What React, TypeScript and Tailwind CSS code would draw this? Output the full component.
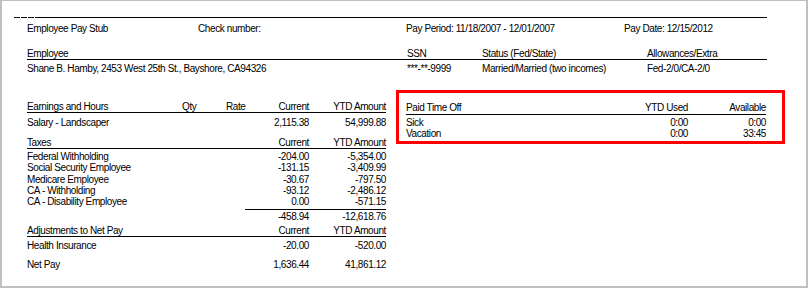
import React from "react";

const FONT = { fontFamily: '"Liberation Sans", Arial, sans-serif' };

type Row = {
  label: string;
  qty?: string;
  rate?: string;
  current?: string;
  ytd?: string;
};

const TAXES: Row[] = [
  { label: "Federal Withholding", current: "-204.00", ytd: "-5,354.00" },
  { label: "Social Security Employee", current: "-131.15", ytd: "-3,409.99" },
  { label: "Medicare Employee", current: "-30.67", ytd: "-797.50" },
  { label: "CA - Withholding", current: "-93.12", ytd: "-2,486.12" },
  { label: "CA - Disability Employee", current: "0.00", ytd: "-571.15" },
];

function LineRow({ row, className = "" }: { row: Row; className?: string }) {
  return (
    <div className={`grid grid-cols-[155px_44px_6px_77px_77px] items-center whitespace-nowrap ${className}`}>
      <span>{row.label}</span>
      <span>{row.qty}</span>
      <span>{row.rate}</span>
      <span className="text-right">{row.current}</span>
      <span className="text-right">{row.ytd}</span>
    </div>
  );
}

export default function App() {
  return (
    <div
      className="w-[808px] h-[288px] bg-white text-black text-[10px] leading-[11px] tracking-[-0.4px] border-[#c0c0c0] border-t border-l-2 border-r-2 border-b-2 overflow-hidden"
      style={FONT}
    >
      {/* top rule */}
      <div className="mt-[16px] ml-[12px] flex w-[753px] gap-[1px]">
        <div className="h-px w-[6px] bg-black" />
        <div className="h-px w-[6px] bg-black" />
        <div className="h-px w-[6px] bg-black" />
        <div className="h-px flex-1 bg-black" />
      </div>

      <div className="pl-[25px] w-[765px]">
        {/* title row */}
        <div className="mt-[5px] grid grid-cols-[171px_208px_218px_1fr] h-[11px] items-center whitespace-nowrap">
          <span>Employee Pay Stub</span>
          <span>Check number:</span>
          <span>Pay Period: 11/18/2007 - 12/01/2007</span>
          <span>Pay Date: 12/15/2012</span>
        </div>

        {/* employee block */}
        <div className="mt-[13px] grid grid-cols-[380px_75px_165px_1fr] h-[13px] items-center whitespace-nowrap border-b border-black">
          <span>Employee</span>
          <span>SSN</span>
          <span>Status (Fed/State)</span>
          <span>Allowances/Extra</span>
        </div>
        <div className="mt-[3px] grid grid-cols-[380px_75px_165px_1fr] h-[11px] items-center whitespace-nowrap">
          <span>Shane B. Hamby, 2453 West 25th St., Bayshore, CA94326</span>
          <span>***-**-9999</span>
          <span>Married/Married (two incomes)</span>
          <span>Fed-2/0/CA-2/0</span>
        </div>
      </div>

      <div className="mt-[16px] ml-[25px] flex items-start">
        {/* earnings / taxes */}
        <div className="mt-[10px] w-[359px]">
          <LineRow
            className="h-[13px] border-b border-black"
            row={{ label: "Earnings and Hours", qty: "Qty", rate: "Rate", current: "Current", ytd: "YTD Amount" }}
          />
          <LineRow className="mt-[4px] h-[11px]" row={{ label: "Salary - Landscaper", current: "2,115.38", ytd: "54,999.88" }} />

          <LineRow className="mt-[9px] h-[12px] border-b border-black" row={{ label: "Taxes", current: "Current", ytd: "YTD Amount" }} />
          <div className="mt-[2px]">
            {TAXES.map((r) => (
              <LineRow key={r.label} className="h-[11.25px]" row={r} />
            ))}
          </div>
          <div className="mt-[2px] ml-[218px] h-px bg-black" />
          <LineRow className="mt-[1px] h-[11px]" row={{ label: "", current: "-458.94", ytd: "-12,618.76" }} />

          <LineRow
            className="mt-[2px] h-[13px] border-b border-black"
            row={{ label: "Adjustments to Net Pay", current: "Current", ytd: "YTD Amount" }}
          />
          <LineRow className="mt-[3px] h-[11px]" row={{ label: "Health Insurance", current: "-20.00", ytd: "-520.00" }} />

          <LineRow className="mt-[8px] h-[11px]" row={{ label: "Net Pay", current: "1,636.44", ytd: "41,861.12" }} />
        </div>

        {/* paid time off */}
        <div className="ml-[10px] w-[389px] border-[3px] border-[#ff0000] pl-[7px] pt-[8px] pb-[2px]">
          <div className="grid w-[360px] grid-cols-[204px_78px_78px] h-[14px] items-center whitespace-nowrap border-b border-black">
            <span>Paid Time Off</span>
            <span className="text-right">YTD Used</span>
            <span className="text-right">Available</span>
          </div>
          <div className="mt-[2px] grid w-[360px] grid-cols-[204px_78px_78px] h-[11px] items-center whitespace-nowrap">
            <span>Sick</span>
            <span className="text-right">0:00</span>
            <span className="text-right">0:00</span>
          </div>
          <div className="grid w-[360px] grid-cols-[204px_78px_78px] h-[11px] items-center whitespace-nowrap">
            <span>Vacation</span>
            <span className="text-right">0:00</span>
            <span className="text-right">33:45</span>
          </div>
        </div>
      </div>
    </div>
  );
}
